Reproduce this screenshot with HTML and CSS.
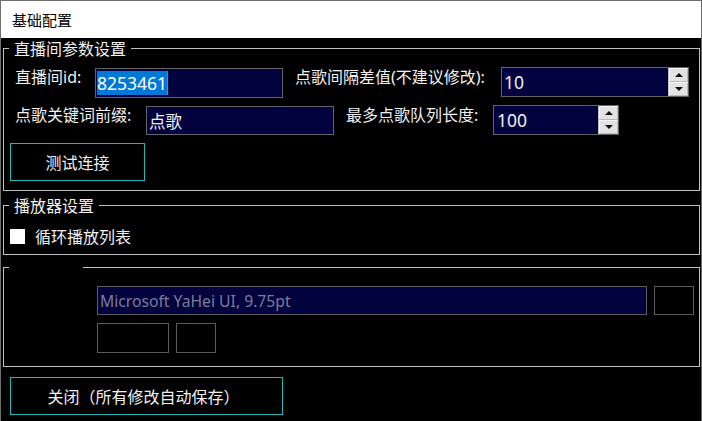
FILE: index.html
```html
<!DOCTYPE html>
<html lang="zh-CN">
<head>
<meta charset="utf-8">
<title>基础配置</title>
<link rel="stylesheet" href="styles.css">
</head>
<body>
<div class="window">
  <div class="titlebar">基础配置</div>
  <div class="content">
    <fieldset class="group g1">
      <legend>直播间参数设置</legend>
      <div class="row r1">
        <span class="lbl l1">直播间id:</span>
        <div class="input in1"><span class="sel">8253461</span><span class="caret"></span></div>
        <span class="lbl l2">点歌间隔差值(不建议修改):</span>
        <div class="input in2"><span class="val">10</span>
          <div class="spinner"><span class="sbtn"><i class="tri up"></i></span><span class="sbtn"><i class="tri down"></i></span></div>
        </div>
      </div>
      <div class="row r2">
        <span class="lbl l3">点歌关键词前缀:</span>
        <div class="input in3"><span class="val cjk">点歌</span></div>
        <span class="lbl l4">最多点歌队列长度:</span>
        <div class="input in4"><span class="val">100</span>
          <div class="spinner"><span class="sbtn"><i class="tri up"></i></span><span class="sbtn"><i class="tri down"></i></span></div>
        </div>
      </div>
      <button class="btn test">测试连接</button>
    </fieldset>

    <fieldset class="group g2">
      <legend>播放器设置</legend>
      <div class="checkrow">
        <span class="check"></span>
        <span class="lbl">循环播放列表</span>
      </div>
    </fieldset>

    <fieldset class="group g3">
      <legend class="blank">&nbsp;</legend>
      <div class="fontrow">
        <div class="input font"><span class="val dim">Microsoft YaHei UI, 9.75pt</span></div>
        <div class="emptybox sq"></div>
      </div>
      <div class="fontrow r4">
        <div class="emptybox wide"></div>
        <div class="emptybox sq2"></div>
      </div>
    </fieldset>

    <button class="btn close">关闭（所有修改自动保存）</button>
  </div>
</div>
</body>
</html>
```

FILE: styles.css
```css
* { box-sizing: border-box; }
html, body { margin: 0; padding: 0; background: #000; }
body { font-family: "Noto Sans", "Noto Sans CJK SC", sans-serif; }

.window {
  width: 702px;
  height: 421px;
  border: 1px solid #6e6e6e;
  border-bottom: none;
  background: #000;
  overflow: hidden;
}

.titlebar {
  height: 37px;
  background: #fff;
  color: #000;
  font-family: "Noto Sans CJK SC", sans-serif;
  font-size: 15px;
  line-height: 37px;
  padding-left: 11px;
}

.content {
  color: #f0f0f0;
  font-size: 16px;
}

.group {
  margin: 0 1px 0 2px;
  padding: 0;
  border: 1px solid #c0c0c0;
  min-width: 0;
}
.group legend {
  margin-left: 5px;
  padding: 0 5px;
  font-family: "Noto Sans CJK SC", sans-serif;
  font-size: 16px;
  line-height: 20px;
  height: 20px;
  color: #f0f0f0;
}
.group legend.blank { width: 74px; }

.g1 { padding-bottom: 9px; }
.g2 { margin-top: 4px; padding-bottom: 8px; }
.g3 { margin-top: 2px; padding-bottom: 13px; }

.row {
  display: flex;
  align-items: flex-start;
  padding-left: 11px;
  height: 30px;
}
.r1 { margin-top: 9px; }
.r2 { margin-top: 8px; }

.lbl { line-height: 20px; white-space: nowrap; }
.l1 { width: 80px; }
.l2 { margin-left: 12px; width: 206px; }
.l3 { width: 131px; }
.l4 { margin-left: 12px; width: 147px; }

.input {
  height: 30px;
  border: 1px solid #646464;
  background: #02023e;
  display: flex;
  align-items: center;
  padding-left: 2px;
  font-size: 17.5px;
  color: #f0f0f0;
}
.in1 { width: 188px; margin-top: 1px; padding-left: 1px; }
.in2 { width: 188px; }
.in3 { width: 188px; margin-top: 1px; height: 29px; }
.in4 { width: 126px; padding-left: 3px; }

.val, .sel { line-height: 24px; white-space: nowrap; }
.cjk { font-family: "Noto Sans CJK SC", sans-serif; font-size: 16.5px; }
.sel { background: #0078d7; color: #fff; height: 24px; display: inline-block; }
.caret { width: 1px; height: 24px; background: #d06a10; }

.spinner {
  margin-left: auto;
  width: 20px;
  height: 28px;
  display: flex;
  flex-direction: column;
  background: #cfcfcf;
  border-left: 1px solid #bdbdbd;
}
.sbtn {
  flex: 1;
  display: flex;
  align-items: center;
  justify-content: center;
  background: #e3e3e3;
  border: 1px solid #f6f6f6;
  border-right-color: #b9b9b9;
  border-bottom-color: #b9b9b9;
}
.tri { width: 0; height: 0; border-left: 4px solid transparent; border-right: 4px solid transparent; }
.tri.up { border-bottom: 4px solid #111; }
.tri.down { border-top: 4px solid #111; }

.btn {
  display: block;
  background: #000;
  color: #f0f0f0;
  border: 1px solid #1fb8b8;
  font-family: "Noto Sans CJK SC", sans-serif;
  font-size: 16px;
  padding: 0;
  text-align: center;
}
.test { margin: 8px 0 0 6px; width: 135px; height: 38px; }
.close { margin: 10px 0 0 9px; width: 273px; height: 38px; padding-right: 6px; }

.checkrow {
  display: flex;
  align-items: center;
  margin-top: 11px;
  padding-left: 6px;
  height: 20px;
}
.check { width: 15px; height: 15px; background: #fff; margin-right: 10px; }
.checkrow .lbl { font-family: "Noto Sans CJK SC", sans-serif; }

.fontrow { display: flex; margin-top: 9px; padding-left: 93px; height: 29px; }
.fontrow.r4 { margin-top: 8px; height: 30px; }
.input.font { width: 550px; height: 29px; border-color: #5c5c5c; font-size: 15.7px; }
.dim { color: #7c7c98; }
.emptybox { border: 1px solid #5c5c5c; height: 100%; }
.sq { width: 40px; margin-left: 7px; }
.wide { width: 72px; }
.sq2 { width: 40px; margin-left: 7px; }
```
